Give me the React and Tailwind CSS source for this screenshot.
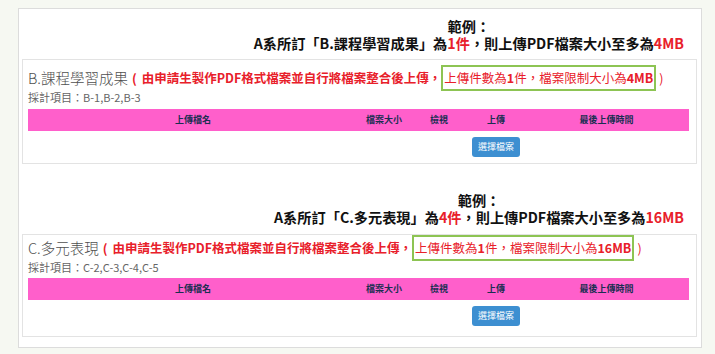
const RED = "text-[#e8202a]";

function Example({ item, count, size, className }) {
  return (
    <div className={"flex justify-end pr-[17px] " + className}>
      <div className="flex flex-col items-center text-[14.2px] leading-[17px] font-bold text-[#111]">
        <div>範例：</div>
        <div className="whitespace-nowrap">
          A系所訂「{item}」為<span className={RED}>{count}件</span>，則上傳PDF檔案大小至多為
          <span className={RED}>{size}</span>
        </div>
      </div>
    </div>
  );
}

function Card({ title, items, size, className, pad, pinkMt, pb }) {
  const cols = "grid grid-cols-[330px_52px_58px_56px_1fr]";
  return (
    <div className={"w-[675px] ml-[3px] border border-[#e3e3e3] bg-white pl-[5px] pr-[7px] " + pad + " " + pb + " " + className}>
      <div className="flex h-[26px] items-center whitespace-nowrap">
        <span className="text-[14.5px] font-light text-[#4f4f4f]">{title}</span>
        <span className={"ml-[4px] text-[12.5px] font-bold " + RED}>(</span>
        <span className={"ml-[5px] text-[12.5px] font-bold " + RED}>
          由申請生製作PDF格式檔案並自行將檔案整合後上傳，
        </span>
        <span className={"flex h-[26px] items-center border-2 border-[#8dc453] px-[1px] text-[12.5px] " + RED}>
          上傳件數為<b>1</b>件，檔案限制大小為<b>{size}</b>
        </span>
        <span className={"ml-[3px] text-[12.5px] " + RED}>)</span>
      </div>
      <div className="text-[11px] leading-[12px] text-[#666]">採計項目：{items}</div>
      <div className={cols + " " + pinkMt + " h-[22px] items-center bg-[#ff5fcb] text-[9px] font-bold text-[#1a2e52]"}>
        <div className="text-center">上傳檔名</div>
        <div className="text-center">檔案大小</div>
        <div className="text-center">檢視</div>
        <div className="text-center">上傳</div>
        <div className="text-center">最後上傳時間</div>
      </div>
      <div className={cols + " mt-[6px] h-[20px]"}>
        <div></div>
        <div></div>
        <div></div>
        <div className="flex justify-center">
          <button className="h-[20px] w-[48px] rounded-[3px] bg-[#3d8fd1] text-[9px] text-white">選擇檔案</button>
        </div>
        <div></div>
      </div>
    </div>
  );
}

export default function App() {
  return (
    <div className="min-h-screen bg-[#f6f8f2] pt-[8px] pl-[18px] font-['Noto_Sans_CJK_TC','Noto_Sans',sans-serif]">
      <div className="h-[340px] w-[684px] border border-[#dcdcdc] bg-white">
        <Example item="B.課程學習成果" count="1" size="4MB" className="pt-[9px]" />
        <Card
          title="B.課程學習成果"
          items="B-1,B-2,B-3"
          size="4MB"
          className="mt-[7px]"
          pad="pt-[5px]"
          pinkMt="mt-[6px]"
          pb="pb-[6px]"
        />
        <Example item="C.多元表現" count="4" size="16MB" className="mt-[28px]" />
        <Card
          title="C.多元表現"
          items="C-2,C-3,C-4,C-5"
          size="16MB"
          className="mt-[8px]"
          pad="pt-0"
          pinkMt="mt-[5px]"
          pb="pb-[10px]"
        />
      </div>
    </div>
  );
}
